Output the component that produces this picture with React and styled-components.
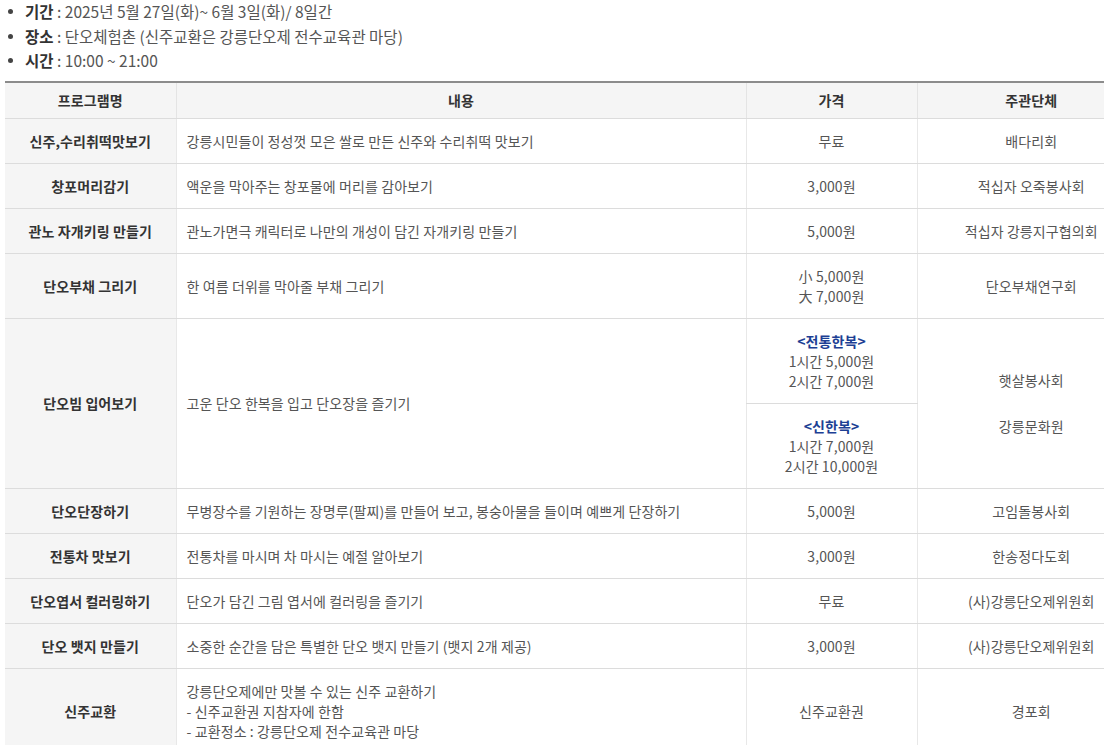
import React from "react";
import styled, { createGlobalStyle } from "styled-components";

const Global = createGlobalStyle`
  html, body { margin: 0; padding: 0; background: #fff; overflow: hidden; }
  body { font-family: "Noto Sans CJK KR", "Noto Sans", sans-serif; color: #555; }
`;

const Page = styled.div`
  padding: 0 0 0 5px;
  width: 1145px;
`;

const InfoList = styled.ul`
  list-style: none;
  margin: -1px 0 8px 0;
  padding: 0;
`;

const InfoItem = styled.li`
  position: relative;
  padding-left: 20px;
  font-size: 15.5px;
  line-height: 24.5px;
  color: #555;
  &::before {
    content: "";
    position: absolute;
    left: 3px;
    top: 10px;
    width: 5px;
    height: 5px;
    border-radius: 50%;
    background: #444;
  }
`;

const Label = styled.b`
  font-weight: 700;
  color: #333;
`;

const Table = styled.table`
  border-collapse: collapse;
  table-layout: fixed;
  width: 1140px;
  border-top: 2px solid #8c8c8c;
  font-size: 14px;
  letter-spacing: 0.1px;
`;

const Th = styled.th`
  background: #f5f5f5;
  color: #333;
  font-weight: 700;
  line-height: 20px;
  padding: 7px 10px 8px;
  text-align: center;
  border-bottom: 1px solid #dcdcdc;
  border-left: 1px solid #e4e4e4;
  &:first-child { border-left: none; }
`;

const NameCell = styled.th`
  background: #f5f5f5;
  color: #333;
  font-weight: 700;
  line-height: 20px;
  padding: 12px 10px;
  text-align: center;
  border-bottom: 1px solid #dcdcdc;
`;

const Td = styled.td`
  color: #555;
  font-weight: 400;
  line-height: 20px;
  padding: 12px 10px;
  text-align: ${(p) => (p.$left ? "left" : "center")};
  border-bottom: 1px solid #dcdcdc;
  border-left: 1px solid #e8e8e8;
  vertical-align: middle;
`;

const Line = styled.div``;

const Strong = styled.div`
  color: #1d3f94;
  font-weight: 700;
`;

const OrgStack = styled.div`
  display: flex;
  flex-direction: column;
  align-items: center;
  gap: 26px;
`;

const Lines = ({ items }) => items.map((t, i) => <Line key={i}>{t}</Line>);

const simpleRows = [
  ["신주,수리취떡맛보기", "강릉시민들이 정성껏 모은 쌀로 만든 신주와 수리취떡 맛보기", ["무료"], "배다리회"],
  ["창포머리감기", "액운을 막아주는 창포물에 머리를 감아보기", ["3,000원"], "적십자 오죽봉사회"],
  ["관노 자개키링 만들기", "관노가면극 캐릭터로 나만의 개성이 담긴 자개키링 만들기", ["5,000원"], "적십자 강릉지구협의회"],
  ["단오부채 그리기", "한 여름 더위를 막아줄 부채 그리기", ["小 5,000원", "大 7,000원"], "단오부채연구회"],
];

const laterRows = [
  ["단오단장하기", ["무병장수를 기원하는 장명루(팔찌)를 만들어 보고, 봉숭아물을 들이며 예쁘게 단장하기"], ["5,000원"], "고임돌봉사회"],
  ["전통차 맛보기", ["전통차를 마시며 차 마시는 예절 알아보기"], ["3,000원"], "한송정다도회"],
  ["단오엽서 컬러링하기", ["단오가 담긴 그림 엽서에 컬러링을 즐기기"], ["무료"], "(사)강릉단오제위원회"],
  ["단오 뱃지 만들기", ["소중한 순간을 담은 특별한 단오 뱃지 만들기 (뱃지 2개 제공)"], ["3,000원"], "(사)강릉단오제위원회"],
  [
    "신주교환",
    ["강릉단오제에만 맛볼 수 있는 신주 교환하기", "- 신주교환권 지참자에 한함", "- 교환정소 : 강릉단오제 전수교육관 마당"],
    ["신주교환권"],
    "경포회",
  ],
];

export default function App() {
  return (
    <Page>
      <Global />
      <InfoList>
        <InfoItem>
          <Label>기간</Label> : 2025년 5월 27일(화)~ 6월 3일(화)/ 8일간
        </InfoItem>
        <InfoItem>
          <Label>장소</Label> : 단오체험촌 (신주교환은 강릉단오제 전수교육관 마당)
        </InfoItem>
        <InfoItem>
          <Label>시간</Label> : 10:00 ~ 21:00
        </InfoItem>
      </InfoList>
      <Table>
        <colgroup>
          <col style={{ width: "171px" }} />
          <col style={{ width: "570px" }} />
          <col style={{ width: "171px" }} />
          <col style={{ width: "228px" }} />
        </colgroup>
        <thead>
          <tr>
            <Th>프로그램명</Th>
            <Th>내용</Th>
            <Th>가격</Th>
            <Th>주관단체</Th>
          </tr>
        </thead>
        <tbody>
          {simpleRows.map(([name, desc, price, org]) => (
            <tr key={name}>
              <NameCell>{name}</NameCell>
              <Td $left>{desc}</Td>
              <Td>
                <Lines items={price} />
              </Td>
              <Td>{org}</Td>
            </tr>
          ))}
          <tr>
            <NameCell rowSpan={2}>단오빔 입어보기</NameCell>
            <Td $left rowSpan={2}>
              고운 단오 한복을 입고 단오장을 즐기기
            </Td>
            <Td>
              <Strong>&lt;전통한복&gt;</Strong>
              <Line>1시간 5,000원</Line>
              <Line>2시간 7,000원</Line>
            </Td>
            <Td rowSpan={2}>
              <OrgStack>
                <Line>햇살봉사회</Line>
                <Line>강릉문화원</Line>
              </OrgStack>
            </Td>
          </tr>
          <tr>
            <Td>
              <Strong>&lt;신한복&gt;</Strong>
              <Line>1시간 7,000원</Line>
              <Line>2시간 10,000원</Line>
            </Td>
          </tr>
          {laterRows.map(([name, desc, price, org]) => (
            <tr key={name}>
              <NameCell>{name}</NameCell>
              <Td $left>
                <Lines items={desc} />
              </Td>
              <Td>
                <Lines items={price} />
              </Td>
              <Td>{org}</Td>
            </tr>
          ))}
        </tbody>
      </Table>
    </Page>
  );
}
